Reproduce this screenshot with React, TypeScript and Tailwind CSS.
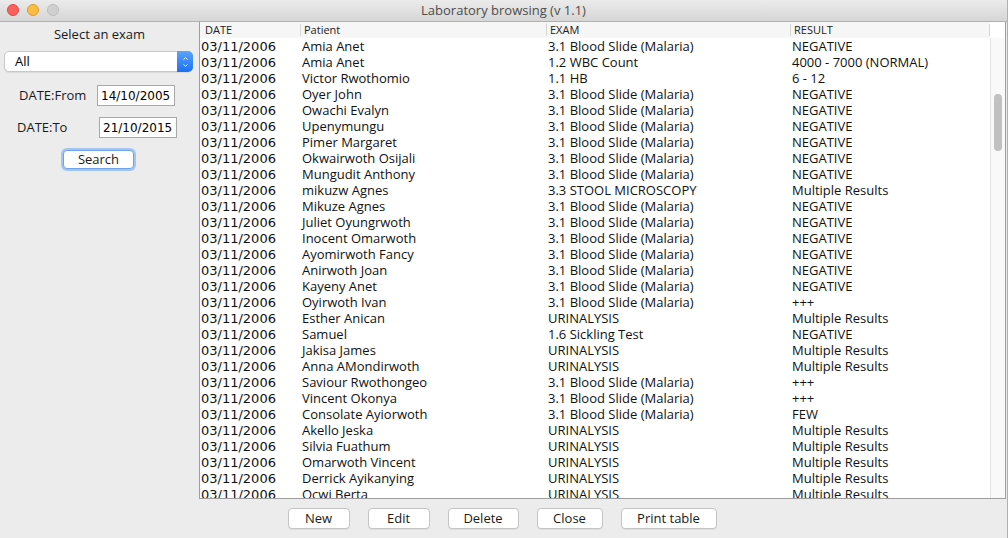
import { ChevronUp, ChevronDown } from 'lucide-react';

const BS = '3.1 Blood Slide (Malaria)';
const UR = 'URINALYSIS';
const MR = 'Multiple Results';

const rows: [string, string, string][] = [
  ['Amia Anet', BS, 'NEGATIVE'],
  ['Amia Anet', '1.2 WBC Count', '4000 - 7000 (NORMAL)'],
  ['Victor Rwothomio', '1.1 HB', '6 - 12'],
  ['Oyer John', BS, 'NEGATIVE'],
  ['Owachi Evalyn', BS, 'NEGATIVE'],
  ['Upenymungu', BS, 'NEGATIVE'],
  ['Pimer Margaret', BS, 'NEGATIVE'],
  ['Okwairwoth Osijali', BS, 'NEGATIVE'],
  ['Mungudit Anthony', BS, 'NEGATIVE'],
  ['mikuzw Agnes', '3.3 STOOL MICROSCOPY', MR],
  ['Mikuze Agnes', BS, 'NEGATIVE'],
  ['Juliet Oyungrwoth', BS, 'NEGATIVE'],
  ['Inocent Omarwoth', BS, 'NEGATIVE'],
  ['Ayomirwoth Fancy', BS, 'NEGATIVE'],
  ['Anirwoth Joan', BS, 'NEGATIVE'],
  ['Kayeny Anet', BS, 'NEGATIVE'],
  ['Oyirwoth Ivan', BS, '+++'],
  ['Esther Anican', UR, MR],
  ['Samuel', '1.6 Sickling Test', 'NEGATIVE'],
  ['Jakisa James', UR, MR],
  ['Anna AMondirwoth', UR, MR],
  ['Saviour Rwothongeo', BS, '+++'],
  ['Vincent Okonya', BS, '+++'],
  ['Consolate Ayiorwoth', BS, 'FEW'],
  ['Akello Jeska', UR, MR],
  ['Silvia Fuathum', UR, MR],
  ['Omarwoth Vincent', UR, MR],
  ['Derrick Ayikanying', UR, MR],
  ['Ocwi Berta', UR, MR],
];

function Btn({ label, w }: { label: string; w: string }) {
  return (
    <div className={`${w} h-[21px] bg-white border border-[#c4c4c4] rounded-[4px] shadow-[0_1px_0_rgba(0,0,0,0.06)] flex items-center justify-center text-[13px] text-[#1a1a1a]`}>
      {label}
    </div>
  );
}

function HeadCell({ label, w, first }: { label: string; w: string; first?: boolean }) {
  return (
    <div className={`${w} h-full flex items-center shrink-0`}>
      {!first && <span className="w-px h-[12px] bg-[#d6d6d6]" />}
      <span className={first ? 'pl-[5px]' : 'pl-[3px]'}>{label}</span>
    </div>
  );
}

export default function App() {
  return (
    <div className="w-[1008px] h-[538px] flex flex-col bg-[#ececec] font-['Open_Sans','DejaVu_Sans',sans-serif] text-black overflow-hidden border-r border-[#b0b0b0]">
      {/* title bar */}
      <div className="h-[22px] shrink-0 relative flex items-center justify-center bg-gradient-to-b from-[#ebebeb] to-[#d6d6d6] border-b border-[#b1b1b1]">
        <div className="absolute left-[7px] top-[4px] flex gap-[8px]">
          <span className="w-[12px] h-[12px] rounded-full bg-[#fc605c] border border-[#df4744]" />
          <span className="w-[12px] h-[12px] rounded-full bg-[#fdbc40] border border-[#dd9e2a]" />
          <span className="w-[12px] h-[12px] rounded-full bg-[#d0d0d0] border border-[#bcbcbc]" />
        </div>
        <span className="text-[13px] text-[#4d4d4d] leading-none">Laboratory browsing (v 1.1)</span>
      </div>

      <div className="flex h-[477px] shrink-0">
        {/* left panel */}
        <div className="w-[199px] shrink-0 flex flex-col">
          <div className="pt-[4px] h-[20px] leading-[16px] text-[13px] text-center text-[#1a1a1a]">Select an exam</div>
          <div className="mt-[9px] ml-[4px] w-[189px] h-[21px] flex bg-white border border-[#c8c8c8] rounded-[5px] shadow-[0_1px_1px_rgba(0,0,0,0.08)]">
            <span className="flex-1 pl-[10px] text-[13px] leading-[19px]">All</span>
            <span className="w-[16px] -my-px -mr-px rounded-r-[5px] bg-gradient-to-b from-[#5aa4fb] to-[#1b6ff2] flex flex-col items-center justify-center text-white">
              <ChevronUp className="w-[9px] h-[7px]" strokeWidth={3} />
              <ChevronDown className="w-[9px] h-[7px]" strokeWidth={3} />
            </span>
          </div>
          <div className="mt-[13px] flex items-center pl-[19px]">
            <span className="w-[78px] text-[13px] text-[#1a1a1a]">DATE:From</span>
            <span className="w-[78px] h-[21px] bg-white border border-[#a8a8a8] pl-[3px] text-[12px] leading-[20px] font-['DejaVu_Sans',sans-serif]">14/10/2005</span>
          </div>
          <div className="mt-[11px] flex items-center pl-[17px]">
            <span className="w-[82px] text-[13px] text-[#1a1a1a]">DATE:To</span>
            <span className="w-[78px] h-[21px] bg-white border border-[#a8a8a8] pl-[3px] text-[12px] leading-[20px] font-['DejaVu_Sans',sans-serif]">21/10/2015</span>
          </div>
          <div className="mt-[12px] ml-[63px] w-[71px] h-[19px] bg-white border border-[#6ea2ee] rounded-[4px] shadow-[0_0_0_2px_rgba(110,165,240,0.55)] flex items-center justify-center text-[13px] text-[#1a1a1a]">
            Search
          </div>
        </div>

        {/* table pane */}
        <div className="w-[807px] shrink-0 flex border-l border-r border-b border-[#9e9e9e] bg-white">
          <div className="w-[790px] flex flex-col">
            <div className="h-[16px] shrink-0 flex bg-[#f6f6f6] text-[11px] text-[#222]">
              <HeadCell label="DATE" w="w-[100px]" first />
              <HeadCell label="Patient" w="w-[246px]" />
              <HeadCell label="EXAM" w="w-[244px]" />
              <div className="w-[200px] h-full flex items-center justify-between shrink-0">
                <span className="flex items-center">
                  <span className="w-px h-[12px] bg-[#d6d6d6]" />
                  <span className="pl-[3px]">RESULT</span>
                </span>
                <span className="w-px h-[12px] bg-[#d6d6d6]" />
              </div>
            </div>
            <div className="flex-1 overflow-hidden text-[13px] text-[#111]">
              {rows.map((r, i) => (
                <div key={i} className="h-[16px] flex leading-[16px] whitespace-nowrap">
                  <span className="w-[100px] shrink-0 pl-[1px] leading-[18px] font-['DejaVu_Sans',sans-serif]">03/11/2006</span>
                  <span className="w-[246px] shrink-0 pl-[2px]">{r[0]}</span>
                  <span className="w-[244px] shrink-0 pl-[2px]">{r[1]}</span>
                  <span className="w-[200px] shrink-0 pl-[2px]">{r[2]}</span>
                </div>
              ))}
            </div>
          </div>
          {/* vertical scrollbar */}
          <div className="w-[15px] shrink-0 flex flex-col">
            <div className="h-[16px] shrink-0 bg-white" />
            <div className="flex-1 bg-[#f9f9f9] border-l border-[#e4e4e4]">
              <div className="mt-[56px] ml-[3px] w-[8px] h-[57px] rounded-full bg-[#c1c1c1]" />
            </div>
          </div>
        </div>
      </div>

      {/* button bar */}
      <div className="flex-1 flex justify-center gap-[18px] pt-[9px] pr-[3px]">
        <Btn label="New" w="w-[62px]" />
        <Btn label="Edit" w="w-[62px]" />
        <Btn label="Delete" w="w-[71px]" />
        <Btn label="Close" w="w-[66px]" />
        <Btn label="Print table" w="w-[96px]" />
      </div>
    </div>
  );
}
